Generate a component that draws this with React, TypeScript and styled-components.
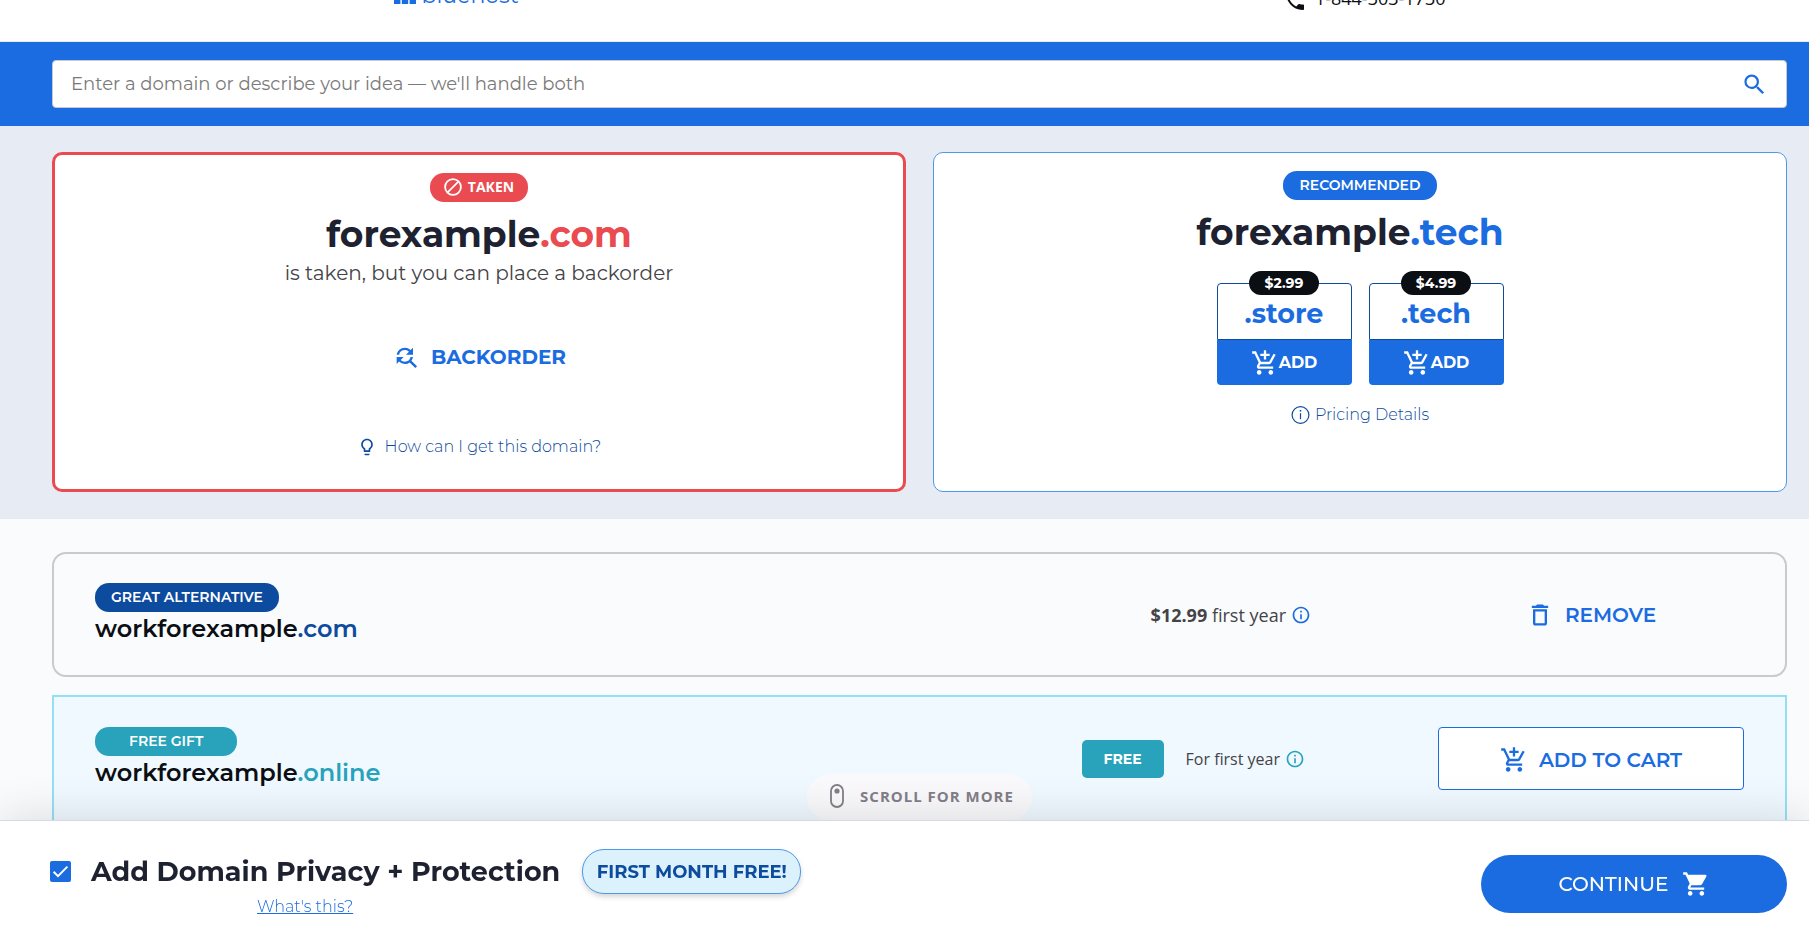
import React from "react";
import styled, { createGlobalStyle, css } from "styled-components";
import {
  MdAddShoppingCart,
  MdDeleteOutline,
  MdFindReplace,
  MdInfoOutline,
  MdLightbulbOutline,
  MdPhone,
  MdSearch,
  MdShoppingCart,
} from "react-icons/md";

const color = {
  blue: "#1a6ce0",
  navy: "#0d4b9e",
  red: "#e94b50",
  teal: "#28a3bb",
  ink: "#1e2230",
  black: "#0b0e13",
  text: "#444347",
};

const brand = `Montserrat, Inter, "Open Sans", sans-serif`;
const body = `"Open Sans", "Noto Sans", sans-serif`;

const GlobalStyle = createGlobalStyle`
  *, *::before, *::after { box-sizing: border-box; }
  body {
    margin: 0;
    background: #fafbfd;
    color: ${color.text};
    font-family: ${brand};
  }
  button, input { font-family: inherit; }
  h1, h2, p { margin: 0; }
  svg { flex: none; display: block; }
`;

/* ---------- header ---------- */

const Header = styled.header`
  height: 42px;
  padding: 0 22px 0 52px;
  overflow: hidden;
  background: #fff;
  border-bottom: 1px solid #e7ebf4;
`;

const HeaderInner = styled.div`
  max-width: 1052px;
  margin: -18px auto 0;
  display: flex;
  justify-content: space-between;
  align-items: flex-start;
`;

const Logo = styled.a`
  display: flex;
  align-items: flex-start;
  gap: 6px;
  color: ${color.blue};
  font-size: 22px;
  line-height: 28px;
  text-decoration: none;
`;

const Phone = styled.a`
  display: flex;
  align-items: flex-start;
  gap: 8px;
  padding-top: 7px;
  color: ${color.black};
  font-family: ${body};
  font-size: 18px;
  line-height: 18px;
  text-decoration: none;
`;

/* ---------- search ---------- */

const SearchBand = styled.form`
  padding: 18px 22px 18px 52px;
  background: ${color.blue};
`;

const SearchBox = styled.div`
  display: flex;
  align-items: center;
  height: 48px;
  padding: 0 18px;
  background: #fff;
  border: 1px solid #c6c8cc;
  border-radius: 4px;
`;

const SearchInput = styled.input`
  flex: 1;
  min-width: 0;
  padding: 0;
  border: 0;
  outline: 0;
  background: none;
  font-size: 18px;
  line-height: 24px;
  color: ${color.ink};
  &::placeholder { color: #7a7a7a; opacity: 1; }
`;

const PlainButton = styled.button`
  display: inline-flex;
  align-items: center;
  justify-content: center;
  padding: 0;
  border: 0;
  background: none;
  color: ${color.blue};
  cursor: pointer;
`;

/* ---------- top cards ---------- */

const Hero = styled.section`
  display: grid;
  grid-template-columns: 1fr 1fr;
  gap: 27px;
  padding: 26px 22px 27px 52px;
  background: #e7ebf4;
`;

const Card = styled.article<{ $taken?: boolean }>`
  display: flex;
  flex-direction: column;
  align-items: center;
  padding: 18px 16px 30px;
  background: #fff;
  border: ${(p) => (p.$taken ? `3px solid ${color.red}` : "1px solid #4f98ea")};
  border-radius: 10px;
`;

const Pill = styled.span<{ $bg: string; $pad: number; $body?: boolean }>`
  display: inline-flex;
  align-items: center;
  gap: 6px;
  height: 29px;
  padding: 0 ${(p) => p.$pad}px 1px;
  border-radius: 14px;
  background: ${(p) => p.$bg};
  color: #fff;
  font-family: ${(p) => (p.$body ? body : brand)};
  font-size: 14px;
  font-weight: ${(p) => (p.$body ? 700 : 600)};
  line-height: 20px;
  white-space: nowrap;
`;

const Domain = styled.h1<{ $trail?: number }>`
  margin-top: 10px;
  padding-right: ${(p) => p.$trail ?? 0}px;
  color: ${color.ink};
  font-size: 36px;
  font-weight: 700;
  line-height: 44px;
`;

const Tld = styled.span<{ $color: string }>`
  color: ${(p) => p.$color};
`;

const Note = styled.p`
  font-size: 20px;
  line-height: 34px;
`;

const Backorder = styled(PlainButton)`
  gap: 11px;
  height: 48px;
  margin-top: 43px;
  font-size: 20px;
  font-weight: 700;
`;

const HelpLink = styled.a<{ $gap: number; $top: number }>`
  display: flex;
  align-items: center;
  gap: ${(p) => p.$gap}px;
  margin-top: ${(p) => p.$top}px;
  color: ${color.navy};
  font-size: 16px;
  font-weight: 300;
  line-height: 24px;
  text-decoration: none;
`;

const Options = styled.div`
  display: flex;
  gap: 17px;
  margin-top: 29px;
`;

const Option = styled.div`
  position: relative;
  width: 135px;
`;

const Price = styled.span`
  position: absolute;
  top: -12px;
  left: 50%;
  width: 70px;
  transform: translateX(-50%);
  border-radius: 12px;
  background: ${color.black};
  color: #fff;
  font-size: 14px;
  font-weight: 700;
  line-height: 24px;
  text-align: center;
`;

const OptionName = styled.div`
  height: 57px;
  padding-top: 14px;
  border: 1px solid ${color.navy};
  border-radius: 4px 4px 0 0;
  color: ${color.blue};
  font-size: 27px;
  font-weight: 700;
  line-height: 32px;
  text-align: center;
`;

const AddButton = styled(PlainButton)`
  width: 100%;
  height: 45px;
  border-radius: 0 0 4px 4px;
  background: ${color.blue};
  color: #fff;
  font-size: 16px;
  font-weight: 700;
`;

/* ---------- result rows ---------- */

const Results = styled.main`
  display: flex;
  flex-direction: column;
  gap: 18px;
  padding: 33px 22px 0 52px;
`;

const Row = styled.article<{ $gift?: boolean }>`
  display: grid;
  grid-template-columns: 1fr auto 306px;
  align-items: start;
  padding: 29px 41px;
  border: 2px solid #c9cacd;
  border-radius: 14px;
  ${(p) =>
    p.$gift &&
    css`
      padding-top: 30px;
      padding-bottom: 48px;
      border-color: #93e0f4;
      border-radius: 0;
      background: #f0f9ff;
    `}
`;

const RowName = styled.h2`
  margin-top: 2px;
  color: ${color.black};
  font-size: 24px;
  font-weight: 600;
  line-height: 30px;
`;

const RowPrice = styled.div<{ $size: number; $trail: number }>`
  display: flex;
  align-items: center;
  height: 63px;
  padding-right: ${(p) => p.$trail}px;
  font-family: ${body};
  font-size: ${(p) => p.$size}px;
  white-space: pre;
`;

const InfoButton = styled(PlainButton)<{ $color: string }>`
  margin-left: 5px;
  color: ${(p) => p.$color};
`;

const FreeTag = styled.span`
  width: 82px;
  margin-right: 22px;
  border-radius: 5px;
  background: ${color.teal};
  color: #fff;
  font-family: ${brand};
  font-size: 14px;
  font-weight: 700;
  line-height: 38px;
  text-align: center;
`;

const RowAction = styled(PlainButton)<{ $outlined?: boolean }>`
  gap: 11px;
  height: 63px;
  font-size: 20px;
  font-weight: 600;
  ${(p) =>
    p.$outlined &&
    css`
      padding-top: 2px;
      border: 1px solid ${color.blue};
      border-radius: 4px;
      background: #fff;
    `}
`;

/* ---------- scroll hint and checkout bar ---------- */

const ScrollHint = styled.div`
  position: fixed;
  right: 22px;
  bottom: 111px;
  left: 52px;
  display: flex;
  justify-content: center;
  pointer-events: none;
`;

const ScrollPill = styled.div`
  display: flex;
  align-items: center;
  gap: 16px;
  height: 46px;
  padding: 0 18px 2px 23px;
  border-radius: 23px;
  background: #fafafc;
  color: #847e88;
  font-family: ${body};
  font-size: 15px;
  font-weight: 700;
  letter-spacing: 1px;
`;

const Checkout = styled.footer`
  position: fixed;
  right: 0;
  bottom: 0;
  left: 0;
  display: flex;
  justify-content: space-between;
  align-items: center;
  padding: 28px 22px 13px 50px;
  border-top: 1px solid #d6dbe2;
  background: #fff;
  box-shadow: 0 0 50px rgba(0, 0, 0, 0.14);
`;

const Offer = styled.div`
  display: grid;
  grid-template-columns: auto auto;
  grid-template-rows: 45px 24px;
  column-gap: 22px;
`;

const OfferLabel = styled.label`
  display: flex;
  align-items: center;
  gap: 20px;
  color: ${color.ink};
  font-size: 27px;
  font-weight: 700;
  line-height: 36px;
`;

const CheckWrap = styled.span`
  display: grid;
  & > * { grid-area: 1 / 1; }
  & > svg { pointer-events: none; }
`;

const Checkbox = styled.input`
  width: 21px;
  height: 21px;
  margin: 0;
  appearance: none;
  border: 2px solid ${color.blue};
  border-radius: 2px;
  &:checked { background: ${color.blue}; }
`;

const OfferBadge = styled.strong`
  width: 219px;
  border: 1px solid #4f98ea;
  border-radius: 22px;
  background: #dbf1fc;
  box-shadow: 0 3px 5px rgba(0, 0, 0, 0.16);
  color: ${color.navy};
  font-size: 18px;
  font-weight: 700;
  line-height: 45px;
  text-align: center;
`;

const OfferLink = styled.a`
  justify-self: center;
  color: ${color.blue};
  font-size: 16px;
  font-weight: 300;
  line-height: 26px;
`;

const Continue = styled(PlainButton)`
  gap: 13px;
  width: 306px;
  height: 58px;
  border-radius: 29px;
  background: ${color.blue};
  color: #fff;
  font-size: 20px;
  font-weight: 500;
`;

/* ---------- drawings ---------- */

const LogoMark = () => (
  <svg width="22" height="22" viewBox="0 0 22 22" fill="currentColor" aria-hidden="true">
    {[0, 7.8, 15.6].map((y) =>
      [0, 7.8, 15.6].map((x) => <rect key={`${x}-${y}`} x={x} y={y} width="6.4" height="6.4" />),
    )}
  </svg>
);

const BlockedIcon = () => (
  <svg width="18" height="18" viewBox="0 0 18 18" fill="none" stroke="currentColor" strokeWidth="1.8" aria-hidden="true">
    <circle cx="9" cy="9" r="7.9" />
    <path d="M3.6 14.4 14.4 3.6" />
  </svg>
);

const ThinInfoIcon = () => (
  <svg width="19" height="19" viewBox="0 0 19 19" fill="none" stroke="currentColor" strokeWidth="1.2" aria-hidden="true">
    <circle cx="9.5" cy="9" r="8.4" />
    <path d="M9.5 7.2v6" />
    <circle cx="9.5" cy="4.8" r="0.9" fill="currentColor" stroke="none" />
  </svg>
);

const MouseIcon = () => (
  <svg width="14" height="24" viewBox="0 0 14 24" fill="none" aria-hidden="true">
    <rect x="1" y="1" width="12" height="22" rx="6" stroke="currentColor" strokeWidth="1.8" />
    <circle cx="7" cy="7" r="2.6" fill="currentColor" />
  </svg>
);

const CheckIcon = () => (
  <svg width="21" height="21" viewBox="0 0 21 21" fill="none" stroke="#fff" strokeWidth="2" aria-hidden="true">
    <path d="M3.6 10.8 8 15.2 17.4 5.6" />
  </svg>
);

const options = [
  { tld: ".store", price: "$2.99" },
  { tld: ".tech", price: "$4.99" },
];

export default function App() {
  return (
    <>
      <GlobalStyle />
      <Header>
        <HeaderInner>
          <Logo href="#home">
            <LogoMark />
            bluehost
          </Logo>
          <Phone href="tel:1-844-303-1730">
            <MdPhone size={24} />
            1-844-303-1730
          </Phone>
        </HeaderInner>
      </Header>

      <SearchBand role="search" onSubmit={(e) => e.preventDefault()}>
        <SearchBox>
          <SearchInput aria-label="Domain search" placeholder="Enter a domain or describe your idea — we'll handle both" />
          <PlainButton type="submit" aria-label="Search">
            <MdSearch size={27} />
          </PlainButton>
        </SearchBox>
      </SearchBand>

      <Hero>
        <Card $taken>
          <Pill $bg={color.red} $pad={14} $body>
            <BlockedIcon />
            TAKEN
          </Pill>
          <Domain>
            forexample<Tld $color={color.red}>.com</Tld>
          </Domain>
          <Note>is taken, but you can place a backorder</Note>
          <Backorder type="button">
            <MdFindReplace size={28} />
            BACKORDER
          </Backorder>
          <HelpLink href="#help" $gap={8} $top={54}>
            <MdLightbulbOutline size={20} />
            How can I get this domain?
          </HelpLink>
        </Card>

        <Card>
          <Pill $bg={color.blue} $pad={17}>
            RECOMMENDED
          </Pill>
          <Domain $trail={20}>
            forexample<Tld $color={color.blue}>.tech</Tld>
          </Domain>
          <Options>
            {options.map((o) => (
              <Option key={o.tld}>
                <OptionName>{o.tld}</OptionName>
                <Price>{o.price}</Price>
                <AddButton type="button">
                  <MdAddShoppingCart size={28} />
                  ADD
                </AddButton>
              </Option>
            ))}
          </Options>
          <HelpLink href="#pricing" $gap={5} $top={18}>
            <ThinInfoIcon />
            Pricing Details
          </HelpLink>
        </Card>
      </Hero>

      <Results>
        <Row>
          <div>
            <Pill $bg={color.navy} $pad={16}>
              GREAT ALTERNATIVE
            </Pill>
            <RowName>
              workforexample<Tld $color={color.navy}>.com</Tld>
            </RowName>
          </div>
          <RowPrice $size={18} $trail={127}>
            <b>$12.99</b> first year
            <InfoButton type="button" aria-label="Price details" $color={color.blue}>
              <MdInfoOutline size={20} />
            </InfoButton>
          </RowPrice>
          <RowAction type="button">
            <MdDeleteOutline size={28} />
            REMOVE
          </RowAction>
        </Row>

        <Row $gift>
          <div>
            <Pill $bg={color.teal} $pad={34}>
              FREE GIFT
            </Pill>
            <RowName>
              workforexample<Tld $color={color.teal}>.online</Tld>
            </RowName>
          </div>
          <RowPrice $size={16} $trail={133}>
            <FreeTag>FREE</FreeTag>
            For first year
            <InfoButton type="button" aria-label="Price details" $color={color.teal}>
              <MdInfoOutline size={20} />
            </InfoButton>
          </RowPrice>
          <RowAction type="button" $outlined>
            <MdAddShoppingCart size={28} />
            ADD TO CART
          </RowAction>
        </Row>
      </Results>

      <ScrollHint>
        <ScrollPill>
          <MouseIcon />
          SCROLL FOR MORE
        </ScrollPill>
      </ScrollHint>

      <Checkout>
        <Offer>
          <OfferLabel>
            <CheckWrap>
              <Checkbox type="checkbox" defaultChecked />
              <CheckIcon />
            </CheckWrap>
            Add Domain Privacy + Protection
          </OfferLabel>
          <OfferBadge>FIRST MONTH FREE!</OfferBadge>
          <OfferLink href="#privacy">What's this?</OfferLink>
        </Offer>
        <Continue type="button">
          CONTINUE
          <MdShoppingCart size={28} />
        </Continue>
      </Checkout>
    </>
  );
}
